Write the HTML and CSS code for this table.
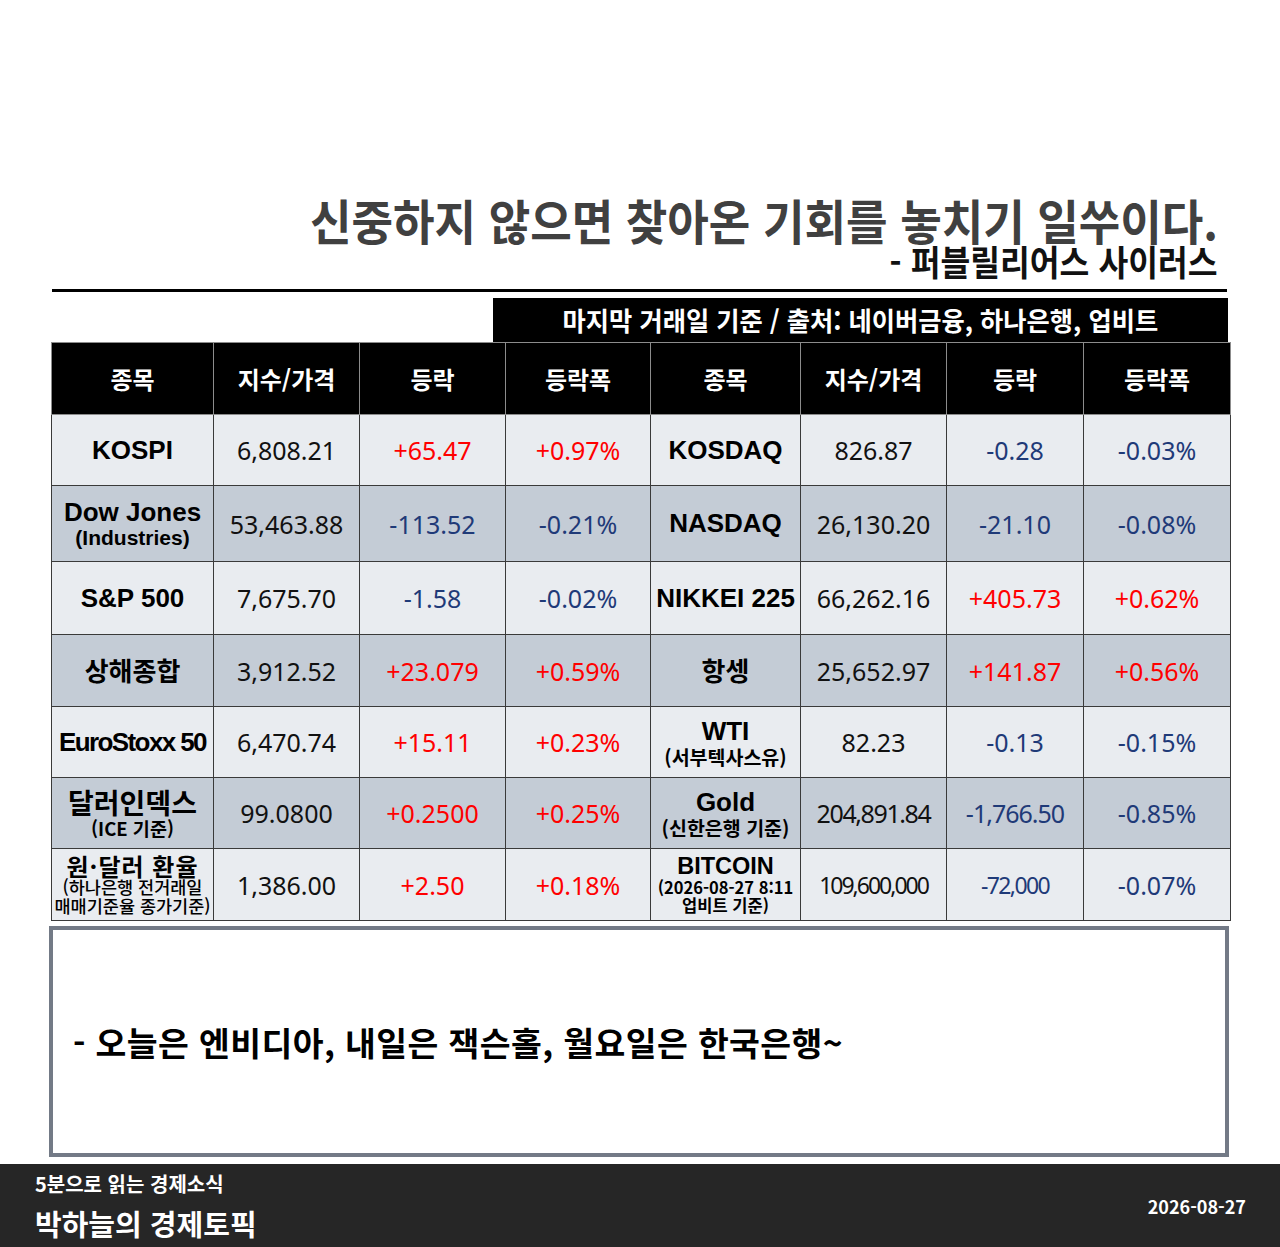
FILE: index.html
```html
<!DOCTYPE html>
<html lang="ko">
<head>
<meta charset="utf-8">
<title>박하늘의 경제토픽</title>
<link rel="stylesheet" href="styles.css">
</head>
<body>
<div class="page">
  <div class="quote">
    <div class="quote-line"><span class="quote-text">신중하지 않으면 찾아온 기회를 놓치기 일쑤이다.</span></div>
    <div class="author-line"><span class="author-text">- 퍼블릴리어스 사이러스</span></div>
  </div>
  <div class="rule"></div>
  <div class="banner"><span class="banner-text">마지막 거래일 기준 / 출처: 네이버금융, 하나은행, 업비트</span></div>
  <table class="market">
    <colgroup>
      <col class="c1"><col class="c2"><col class="c3"><col class="c4">
      <col class="c5"><col class="c6"><col class="c7"><col class="c8">
    </colgroup>
    <thead>
      <tr class="head">
        <th>종목</th><th>지수/가격</th><th>등락</th><th>등락폭</th>
        <th>종목</th><th>지수/가격</th><th>등락</th><th>등락폭</th>
      </tr>
    </thead>
    <tbody>
      <tr class="light r1">
        <td class="name en">KOSPI</td><td class="num">6,808.21</td><td class="num up">+65.47</td><td class="num up">+0.97%</td>
        <td class="name en">KOSDAQ</td><td class="num">826.87</td><td class="num down">-0.28</td><td class="num down">-0.03%</td>
      </tr>
      <tr class="dark r2">
        <td class="name"><div class="en">Dow Jones</div><div class="en sub-en">(Industries)</div></td><td class="num">53,463.88</td><td class="num down">-113.52</td><td class="num down">-0.21%</td>
        <td class="name en">NASDAQ</td><td class="num">26,130.20</td><td class="num down">-21.10</td><td class="num down">-0.08%</td>
      </tr>
      <tr class="light r3">
        <td class="name en">S&amp;P 500</td><td class="num">7,675.70</td><td class="num down">-1.58</td><td class="num down">-0.02%</td>
        <td class="name en">NIKKEI 225</td><td class="num">66,262.16</td><td class="num up">+405.73</td><td class="num up">+0.62%</td>
      </tr>
      <tr class="dark r4">
        <td class="name ko">상해종합</td><td class="num">3,912.52</td><td class="num up">+23.079</td><td class="num up">+0.59%</td>
        <td class="name ko">항셍</td><td class="num">25,652.97</td><td class="num up">+141.87</td><td class="num up">+0.56%</td>
      </tr>
      <tr class="light r5">
        <td class="name en tight">EuroStoxx 50</td><td class="num">6,470.74</td><td class="num up">+15.11</td><td class="num up">+0.23%</td>
        <td class="name"><div class="en">WTI</div><div class="ko sub-ko wide">(서부텍사스유)</div></td><td class="num">82.23</td><td class="num down">-0.13</td><td class="num down">-0.15%</td>
      </tr>
      <tr class="dark r6">
        <td class="name"><div class="ko big-ko">달러인덱스</div><div class="ko sub-ko">(ICE 기준)</div></td><td class="num">99.0800</td><td class="num up">+0.2500</td><td class="num up">+0.25%</td>
        <td class="name"><div class="en">Gold</div><div class="ko sub-ko wide">(신한은행 기준)</div></td><td class="num squeeze">204,891.84</td><td class="num down squeeze-s">-1,766.50</td><td class="num down">-0.85%</td>
      </tr>
      <tr class="light r7">
        <td class="name"><div class="ko fx">원·달러 환율</div><div class="ko small-ko">(하나은행 전거래일</div><div class="ko small-ko">매매기준율 종가기준)</div></td><td class="num">1,386.00</td><td class="num up">+2.50</td><td class="num up">+0.18%</td>
        <td class="name"><div class="en btc">BITCOIN</div><div class="ko small-ko btc-sub">(2026-08-27 8:11</div><div class="ko small-ko btc-sub">업비트 기준)</div></td><td class="num squeeze-l">109,600,000</td><td class="num down squeeze-m">-72,000</td><td class="num down">-0.07%</td>
      </tr>
    </tbody>
  </table>
  <div class="memo">
    <p class="memo-text">- 오늘은 엔비디아, 내일은 잭슨홀, 월요일은 한국은행~</p>
  </div>
</div>
<footer class="footer">
  <div class="brand">
    <div class="brand-sub">5분으로 읽는 경제소식</div>
    <div class="brand-title">박하늘의 경제토픽</div>
  </div>
  <div class="date">2026-08-27</div>
</footer>
</body>
</html>
```

FILE: styles.css
```css
* { box-sizing: border-box; }
html, body { margin: 0; padding: 0; background: #ffffff; }
body {
  font-family: "Noto Sans CJK KR", "Noto Sans", sans-serif;
  color: #000;
  width: 1280px;
}
.page {
  padding: 195px 50px 0 51px;
}
.quote { padding-right: 12px; text-align: right; }
.quote-line { height: 48px; }
.quote-text {
  display: inline-block;
  font-size: 48px;
  line-height: 48px;
  font-weight: 700;
  color: #404040;
  white-space: nowrap;
  transform: scaleX(0.94);
  transform-origin: right center;
}
.author-line { height: 35px; }
.author-text {
  display: inline-block;
  font-size: 35px;
  line-height: 35px;
  font-weight: 700;
  color: #111;
  white-space: nowrap;
  transform: scaleX(0.925);
  transform-origin: right center;
}
.rule {
  height: 3px;
  background: #000;
  margin: 11px 3px 0 1px;
}
.banner {
  margin: 6px 2px 0 auto;
  width: 735px;
  height: 44px;
  background: #000;
  color: #fff;
  display: flex;
  align-items: center;
  justify-content: center;
}
.banner-text {
  display: inline-block;
  font-size: 26px;
  font-weight: 700;
  white-space: nowrap;
  transform: scaleX(0.972);
  line-height: 1;
}
.market {
  width: 1179px;
  border-collapse: collapse;
  table-layout: fixed;
}
.c1 { width: 162px; } .c2 { width: 146px; } .c3 { width: 146px; } .c4 { width: 145px; }
.c5 { width: 150px; } .c6 { width: 146px; } .c7 { width: 137px; } .c8 { width: 147px; }
.market th {
  background: #000;
  color: #fff;
  font-size: 24px;
  font-weight: 700;
  border: 1px solid #8c8c8c;
  padding: 0;
  height: 72px;
}
.market td {
  border: 1px solid #3a3a3a;
  padding: 0;
  text-align: center;
  vertical-align: middle;
}
.market tr.light td { background: #e9ecf0; }
.market tr.dark td { background: #c4ccd6; }
.r1 td { height: 71px; }
.r2 td { height: 76px; }
.r3 td { height: 73px; }
.r4 td { height: 72px; }
.r5 td { height: 71px; }
.r6 td { height: 71px; }
.r7 td { height: 72px; }
.en {
  font-family: "Liberation Sans", Arial, sans-serif;
  font-weight: 700;
  font-size: 26px;
  line-height: 1.1;
}
.ko {
  font-family: "Noto Sans CJK KR", sans-serif;
  font-weight: 700;
  font-size: 26px;
  line-height: 1.1;
}
.tight { letter-spacing: -1.6px; white-space: nowrap; }
.sub-en { font-size: 21px; line-height: 1.05; }
.sub-ko { font-size: 18.5px; line-height: 1.1; }
.sub-ko.wide { font-size: 19.5px; }
.big-ko { font-size: 28px; line-height: 1.05; }
.fx { font-size: 24px; line-height: 1.05; letter-spacing: 1px; }
.btc { font-size: 23.5px; line-height: 1.05; }
.small-ko { font-size: 17.5px; line-height: 1.08; white-space: nowrap; letter-spacing: 0; font-weight: 500; }
.small-ko.btc-sub { font-size: 16.5px; font-weight: 700; }
.num {
  font-family: "Noto Sans", "Open Sans", sans-serif;
  font-weight: 400;
  font-size: 25px;
  color: #111;
  white-space: nowrap;
}
.num.up { color: #ff0000; }
.num.down { color: #1f3a78; }
.squeeze { letter-spacing: -1.4px; }
.squeeze-s { letter-spacing: -1px; }
.squeeze-l { font-size: 23px; letter-spacing: -2px; }
.squeeze-m { font-size: 23px; letter-spacing: -1.6px; }
.memo {
  margin: 5px 0 0 -2px;
  width: 1180px;
  height: 231px;
  border: 4px solid #737a86;
  background: #fff;
  display: flex;
  align-items: center;
  padding-left: 20px;
}
.memo-text {
  margin: 0;
  font-size: 33.5px;
  font-weight: 700;
  letter-spacing: 0.4px;
  color: #000;
}
.footer {
  margin-top: 7px;
  height: 83px;
  background: #262626;
  color: #fff;
  display: flex;
  align-items: center;
  justify-content: space-between;
  padding: 0 34px 0 35px;
}
.brand { display: flex; flex-direction: column; gap: 10px; padding-top: 1px; }
.brand-sub { font-size: 20px; font-weight: 700; line-height: 24px; }
.brand-title { font-size: 29px; font-weight: 700; line-height: 34px; }
.date { font-size: 18px; font-weight: 700; line-height: 24px; }
```
